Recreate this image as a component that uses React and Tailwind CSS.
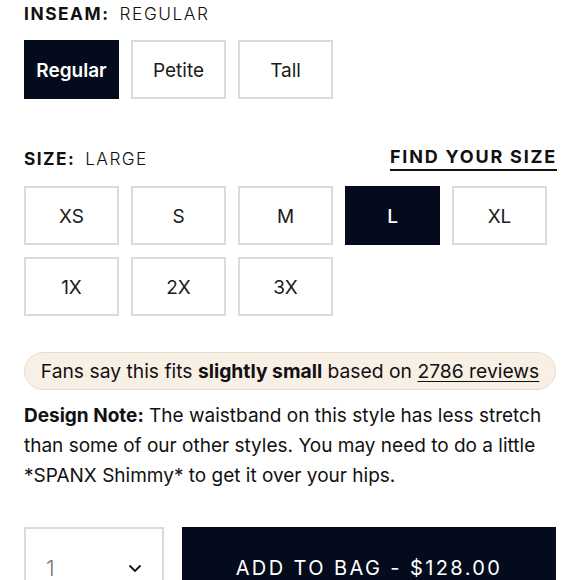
import React from "react";

const inseams = ["Regular", "Petite", "Tall"];
const sizes = ["XS", "S", "M", "L", "XL", "1X", "2X", "3X"];

function OptionButton({ label, active, bold }) {
  return (
    <button
      className={
        active
          ? "w-[95px] h-[59px] pt-[3px] bg-[#040b1d] text-white text-[19px] " + (bold ? "font-semibold" : "font-medium")
          : "w-[95px] h-[59px] pt-[3px] bg-white border-2 border-[#d9dbe0] text-[#1a1a1a] text-[19px]"
      }
    >
      {label}
    </button>
  );
}

export default function App() {
  return (
    <div className="w-[580px] h-[580px] overflow-hidden bg-white px-[24px] font-['Inter','Liberation_Sans',sans-serif] text-[#111]">
      {/* Inseam */}
      <div className="h-[26px] pt-[2px] flex items-center text-[17.3px] tracking-[0.09em]">
        <span className="font-bold">INSEAM:</span>
        <span className="ml-[10px] font-light">REGULAR</span>
      </div>
      <div className="mt-[14px] flex gap-[12px]">
        {inseams.map((s, i) => (
          <OptionButton key={s} label={s} active={i === 0} bold />
        ))}
      </div>

      {/* Size */}
      <div className="mt-[45px] h-[26px] flex items-center justify-between tracking-[0.09em]">
        <div className="flex items-center pt-[3px] text-[17.3px]">
          <span className="font-bold">SIZE:</span>
          <span className="ml-[10px] font-light">LARGE</span>
        </div>
        <a className="text-[18px] tracking-[0.1em] font-bold leading-[22px] border-b-2 border-[#111] pb-[1px] mt-[2px] -mr-[1px]">
          FIND YOUR SIZE
        </a>
      </div>
      <div className="mt-[16px] grid grid-cols-[repeat(5,95px)] gap-[12px]">
        {sizes.map((s) => (
          <OptionButton key={s} label={s} active={s === "L"} />
        ))}
      </div>

      {/* Fit pill */}
      <div className="mt-[36px] h-[38px] pt-[1px] flex items-center justify-center rounded-full bg-[#f8efe5] border border-[#e9dcc9] text-[19.3px] text-[#111]">
        Fans say this fits&nbsp;<span className="font-bold">slightly small</span>&nbsp;based on&nbsp;
        <span className="underline underline-offset-[3px]">2786 reviews</span>
      </div>

      {/* Design note */}
      <p className="mt-[11px] text-[19px] leading-[30px] text-[#111]">
        <span className="font-bold">Design Note:</span> The waistband on this style has less stretch than some of our
        other styles. You may need to do a little *SPANX Shimmy* to get it over your hips.
      </p>

      {/* Qty + add to bag */}
      <div className="mt-[36px] flex gap-[18px]">
        <div className="w-[140px] h-[64px] border-2 border-[#d9dbe0] flex items-center justify-between pl-[20px] pr-[20px] pt-[18px]">
          <span className="text-[22px] font-light text-[#777]">1</span>
          <svg width="14" height="9" viewBox="0 0 14 9" fill="none" stroke="#111" strokeWidth="1.8">
            <path d="M1.5 1.5 L7 7 L12.5 1.5" />
          </svg>
        </div>
        <button className="flex-1 h-[64px] bg-[#040b1d] text-white text-[20px] tracking-[0.12em] pt-[18px]">
          ADD TO BAG - $128.00
        </button>
      </div>
    </div>
  );
}
